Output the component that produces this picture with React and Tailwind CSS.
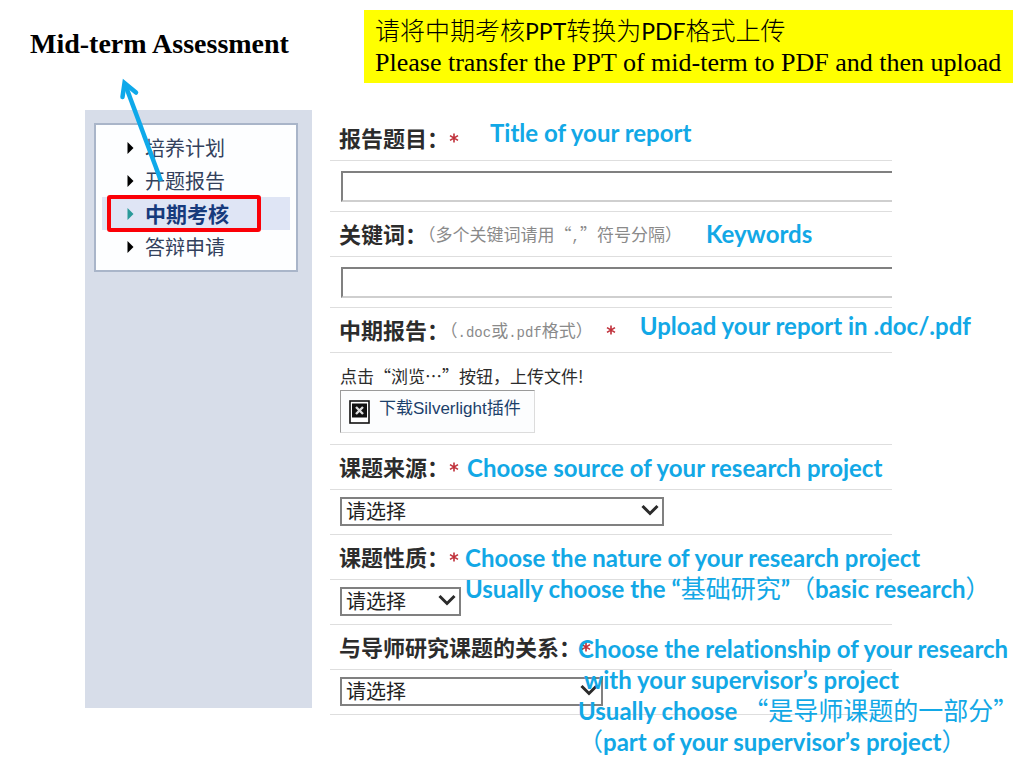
import React from "react";

const CJK = "font-['Noto_Sans_CJK_SC',sans-serif] [text-spacing-trim:space-all]";
const NOTE =
  "font-['Lato','Noto_Sans_CJK_SC',sans-serif] text-[24px] leading-[31px] font-bold whitespace-nowrap text-[#12a8e6] [font-variant-ligatures:none]";

function Note({ className = "", children }) {
  return <p className={`${NOTE} ${className}`}>{children}</p>;
}

function Han({ children }) {
  return (
    <span className="font-['Noto_Sans_CJK_SC',sans-serif] text-[25px] leading-none font-normal">
      {children}
    </span>
  );
}

function Star() {
  return (
    <svg viewBox="0 0 10 10" className="h-[10px] w-[10px] shrink-0" aria-hidden="true">
      <path d="M5 0.5V9.5M1 2.6L9 7.4M9 2.6L1 7.4" stroke="#c0303a" strokeWidth="1.6" />
    </svg>
  );
}

function LabelRow({ id, text, children }) {
  return (
    <div className="relative flex h-[45px] items-center border-b border-[#dedede] pl-[9px]">
      <label
        htmlFor={id}
        className="pb-[2px] text-[22px] leading-[30px] font-bold whitespace-nowrap text-[#2c2c2c]"
      >
        {text}
      </label>
      {children}
    </div>
  );
}

function Hint({ children }) {
  return (
    <span className="text-[17px] leading-[26px] whitespace-nowrap text-[#8a8a8a]">
      <span className="[font-feature-settings:'halt']">（</span>
      {children}
    </span>
  );
}

function Mono({ children }) {
  return (
    <span className="font-['Liberation_Mono',monospace] text-[14px] leading-none">{children}</span>
  );
}

function TextRow({ id }) {
  return (
    <div className="flex h-[51px] items-center border-b border-[#dedede] pl-[11px]">
      <input
        id={id}
        type="text"
        className="h-[31px] w-full border-t-2 border-b-2 border-l-2 border-t-[#808080] border-b-[#cfcfcf] border-l-[#808080] bg-white px-2 outline-none"
      />
    </div>
  );
}

function SelectRow({ id, width }) {
  return (
    <div className="flex h-[45px] items-center border-b border-[#dedede] pb-[2px] pl-[10px]">
      <div className={`relative ${width}`}>
        <select
          id={id}
          className="block h-[29px] w-full appearance-none border-2 border-[#808080] bg-white pl-[4px] text-[20px] leading-[24px] text-[#222] outline-none"
        >
          <option>请选择</option>
        </select>
        <svg
          viewBox="0 0 18 12"
          className="pointer-events-none absolute top-[7px] right-[5px] h-[12px] w-[18px]"
          fill="none"
          aria-hidden="true"
        >
          <path d="M1.5 2L9 9.5L16.5 2" stroke="#2b2b2b" strokeWidth="3" />
        </svg>
      </div>
    </div>
  );
}

const MENU = ["培养计划", "开题报告", "中期考核", "答辩申请"];

function Sidebar() {
  return (
    <aside className="relative mb-[7px] w-[227px] shrink-0 bg-[#d7dde9] pt-[13px] pr-[14px] pl-[9px]">
      <nav className="border-2 border-[#a9b5c9] bg-[#fdfeff] px-[6px] pt-[6px] pb-[7px]">
        <ul>
          {MENU.map((item) => {
            const active = item === "中期考核";
            return (
              <li key={item} className="relative">
                <a
                  href="#"
                  className={
                    active
                      ? "flex h-[33px] items-center gap-[11px] bg-[#dfe5f5] pl-[25px] text-[21px] font-bold text-[#173a7c]"
                      : "flex h-[33px] items-center gap-[11px] pl-[25px] text-[20px] text-[#33415c]"
                  }
                >
                  <svg viewBox="0 0 7 12" className="h-[12px] w-[7px]" aria-hidden="true">
                    <path d="M0.5 0L6.5 6L0.5 12Z" fill={active ? "#2a9a9a" : "#000"} />
                  </svg>
                  {item}
                </a>
                {active && (
                  <span className="pointer-events-none absolute -top-[2px] left-[5px] h-[37px] w-[154px] rounded-[3px] border-4 border-[#fb0007]" />
                )}
              </li>
            );
          })}
        </ul>
      </nav>
      <svg
        viewBox="0 0 55 114"
        className="pointer-events-none absolute -top-[36px] left-[30px] h-[114px] w-[55px]"
        fill="none"
        stroke="#0ea9ea"
        strokeLinecap="round"
        aria-hidden="true"
      >
        <path d="M10 10L46 107" strokeWidth="4.5" strokeLinecap="butt" />
        <path d="M7.500 23L9.500 9L21 18.500" strokeWidth="4.5" strokeLinejoin="miter" />
      </svg>
    </aside>
  );
}

export default function App() {
  return (
    <main className={`min-h-screen overflow-hidden bg-white pb-[53px] ${CJK}`}>
      <header className="flex items-start pt-[10px] pr-[11px] pl-[30px]">
        <h1 className="w-[334px] shrink-0 pt-[17px] font-['Liberation_Serif',serif] text-[28px] leading-[34px] font-bold whitespace-nowrap text-black">
          Mid-term Assessment
        </h1>
        <div className="min-w-0 flex-1 bg-[#ffff00] pt-[6px] pb-[5px] pl-[11px] whitespace-nowrap text-black">
          <p className="font-['Lato',sans-serif] text-[23px] leading-[31px]">
            <span className="font-['Noto_Sans_CJK_SC',sans-serif] text-[25px] leading-none font-light">请将中期考核</span>
            PPT
            <span className="font-['Noto_Sans_CJK_SC',sans-serif] text-[25px] leading-none font-light">转换为</span>
            PDF
            <span className="font-['Noto_Sans_CJK_SC',sans-serif] text-[25px] leading-none font-light">格式上传</span>
          </p>
          <p className="font-['Liberation_Serif',serif] text-[26px] leading-[31px]">
            Please transfer the PPT of mid-term to PDF and then upload
          </p>
        </div>
      </header>

      <div className="flex gap-[18px] pt-[27px] pr-[132px] pl-[85px]">
        <Sidebar />
        <form className="min-w-0 flex-1 pt-[6px]">
          <LabelRow id="title" text="报告题目：">
            <Star />
            <Note className="pb-[11px] pl-[31px]">Title of your report</Note>
          </LabelRow>
          <TextRow id="title" />

          <LabelRow id="keywords" text="关键词：">
            <Hint>
              多个关键词请用“<Mono>,</Mono>”符号分隔）
            </Hint>
            <Note className="pb-[2px] pl-[24px]">Keywords</Note>
          </LabelRow>
          <TextRow id="keywords" />

          <LabelRow id="upload" text="中期报告：">
            <Hint>
              <Mono>.doc</Mono>或<Mono>.pdf</Mono>格式）
            </Hint>
            <span className="pl-[13px]">
              <Star />
            </span>
            <Note className="pb-[10px] pl-[24px]">Upload your report in .doc/.pdf</Note>
          </LabelRow>
          <div className="h-[92px] border-b border-[#dedede] pt-[8px] pl-[10px]">
            <p className="text-[17px] leading-[29px] whitespace-nowrap text-[#2c2c2c]">
              点击“浏览…”按钮，上传文件!
            </p>
            <a
              id="upload"
              href="#"
              className="flex h-[43px] w-[195px] items-center gap-[9px] border border-t-[#9a9a9a] border-r-[#dcdcdc] border-b-[#dcdcdc] border-l-[#9a9a9a] bg-[#fcfdfe] pl-[8px] font-['Liberation_Sans','Noto_Sans_CJK_SC',sans-serif] text-[17px] whitespace-nowrap text-[#1b3f6b]"
            >
              <svg viewBox="0 0 21 24" className="h-[24px] w-[21px] shrink-0" aria-hidden="true">
                <rect x="1" y="1" width="19" height="22" fill="#fff" stroke="#111" strokeWidth="1.6" />
                <rect x="3" y="3.5" width="15" height="14" fill="#111" />
                <path d="M7 7L14 14M14 7L7 14" stroke="#ddd" strokeWidth="2.4" />
              </svg>
              <span className="pb-[5px]">下载Silverlight插件</span>
            </a>
          </div>

          <LabelRow id="source" text="课题来源：">
            <Star />
            <Note className="pl-[8px]">Choose source of your research project</Note>
          </LabelRow>
          <SelectRow id="source" width="w-[324px]" />

          <LabelRow id="nature" text="课题性质：">
            <Star />
            <div className="absolute top-[7px] left-[135px] z-10">
              <Note>Choose the nature of your research project</Note>
              <Note>
                Usually choose the “<Han>基础研究</Han>”<Han>（</Han>basic research<Han>）</Han>
              </Note>
            </div>
          </LabelRow>
          <SelectRow id="nature" width="w-[121px]" />

          <LabelRow id="relation" text="与导师研究课题的关系：">
            <Star />
            <div className="absolute top-[8px] left-[248px] z-10">
              <Note>Choose the relationship of your research</Note>
              <Note className="pl-[6px]">with your supervisor’s project</Note>
              <Note>
                Usually choose <Han>“是导师课题的一部分”</Han>
              </Note>
              <Note>
                <Han>（</Han>part of your supervisor’s project<Han>）</Han>
              </Note>
            </div>
          </LabelRow>
          <SelectRow id="relation" width="w-[263px]" />
        </form>
      </div>
    </main>
  );
}
